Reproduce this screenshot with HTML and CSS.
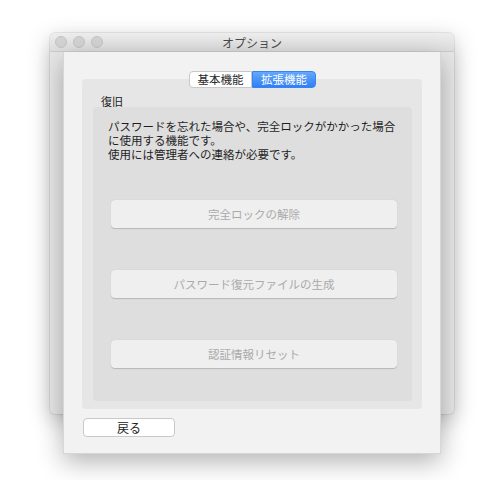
FILE: index.html
```html
<!DOCTYPE html>
<html lang="ja">
<head>
  <meta charset="UTF-8" />
  <title>オプション</title>
  <link rel="stylesheet" href="styles.css">
</head>
<body>
  <div class="desk">
    <!-- 背面のウィンドウ -->
    <div class="window">
      <div class="titlebar">
        <div class="lights"><span></span><span></span><span></span></div>
        <div class="title">オプション</div>
        <div></div>
      </div>
    </div>

    <!-- シート -->
    <div class="sheet">
      <div class="tabs">
        <button class="tab">基本機能</button>
        <button class="tab active">拡張機能</button>
      </div>
      <div class="tab-box">
        <div class="group-label">復旧</div>
        <div class="group">
          <p class="desc">パスワードを忘れた場合や、完全ロックがかかった場合<br>に使用する機能です。<br>使用には管理者への連絡が必要です。</p>
          <div class="actions">
            <button class="action" disabled>完全ロックの解除</button>
            <button class="action" disabled>パスワード復元ファイルの生成</button>
            <button class="action" disabled>認証情報リセット</button>
          </div>
        </div>
      </div>
      <button class="back">戻る</button>
    </div>
  </div>
</body>
</html>
```

FILE: styles.css
```css
* {
  margin: 0;
  padding: 0;
  box-sizing: border-box;
}

body {
  background: #ffffff;
  font-family: 'Noto Sans CJK JP', 'Noto Sans', sans-serif;
  color: #222;
}

button {
  font-family: inherit;
}

.desk {
  position: relative;
  min-height: 480px;
  padding: 52px 0 0 63px;
}

.window {
  position: absolute;
  top: 33px;
  left: 50px;
  width: 404px;
  height: 381px;
  border-radius: 5px;
  background: #e8e8e8;
  box-shadow: 0 6px 22px rgba(0, 0, 0, 0.26), 0 0 0 1px rgba(0, 0, 0, 0.07);
}

.titlebar {
  display: grid;
  grid-template-columns: 1fr auto 1fr;
  align-items: center;
  height: 19px;
  border-radius: 5px 5px 0 0;
  background: linear-gradient(#ededed, #dedede);
  border-bottom: 1px solid #cdcdcd;
}

.lights {
  display: flex;
  gap: 6px;
  padding-left: 5px;
}

.lights span {
  width: 12px;
  height: 12px;
  border-radius: 50%;
  background: #d3d3d3;
  border: 1px solid #c4c4c4;
}

.title {
  font-size: 12px;
  color: #4a4a4a;
}

.sheet {
  position: relative;
  width: 378px;
  padding: 19px 18px 16px;
  background: #f2f2f2;
  border: 1px solid #d6d6d6;
  border-top: none;
  box-shadow: 0 8px 24px rgba(0, 0, 0, 0.3);
}

.tabs {
  position: relative;
  z-index: 1;
  display: flex;
  justify-content: center;
  margin-left: 1px;
}

.tab {
  width: 63px;
  height: 17px;
  font-size: 11.5px;
  line-height: 15px;
  color: #2a2a2a;
  background: #ffffff;
  border: 1px solid #c8c8c8;
  border-radius: 4px 0 0 4px;
}

.tab.active {
  width: 64px;
  color: #ffffff;
  background: linear-gradient(#65a8fb, #2f80f5);
  border-color: #3584f3;
  border-radius: 0 4px 4px 0;
}

.tab-box {
  margin-top: -9px;
  padding: 16px 10px 8px 11px;
  background: #e6e6e6;
  border-radius: 4px;
}

.group-label {
  margin-left: 8px;
  font-size: 11px;
  line-height: 12px;
  color: #222;
}

.group {
  padding: 12px 15px 33px 15px;
  background: #dedede;
  border-radius: 4px;
}

.desc {
  font-size: 11.5px;
  line-height: 14px;
  color: #1e1e1e;
  white-space: nowrap;
}

.actions {
  display: flex;
  flex-direction: column;
  gap: 42px;
  margin: 39px 0 0 3px;
}

.action {
  height: 28px;
  font-size: 11.5px;
  color: #aaaaaa;
  background: #efefef;
  border: none;
  border-radius: 4px;
  box-shadow: 0 0.5px 1px rgba(0, 0, 0, 0.18);
}

.back {
  display: block;
  width: 92px;
  height: 19px;
  margin: 9px 0 0 1px;
  font-size: 12px;
  line-height: 16px;
  color: #222;
  background: #ffffff;
  border: 1px solid #c9c9c9;
  border-radius: 4px;
}
```
